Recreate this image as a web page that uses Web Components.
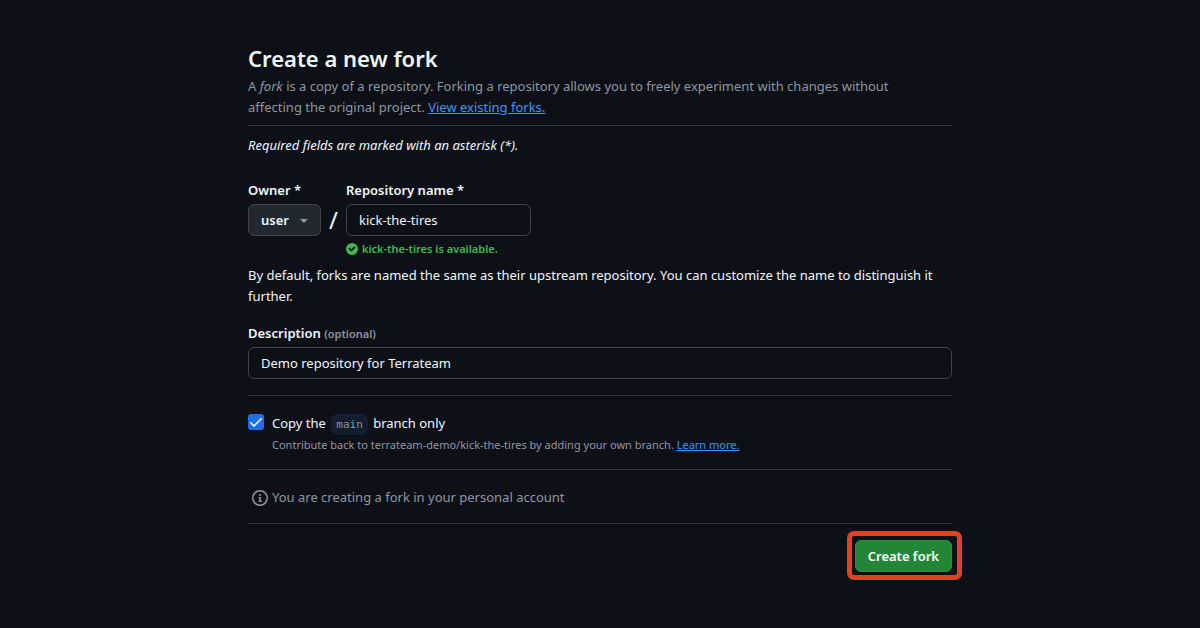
<!DOCTYPE html>
<html lang="en">
<head>
<meta charset="utf-8">
<meta name="viewport" content="width=device-width, initial-scale=1">
<title>Create a new fork</title>
<style>
  :root {
    --bg: #0d1117;
    --text: #f0f6fc;
    --muted: #8d96a0;
    --border: #30363d;
    --control-border: #3d444d;
    --link: #4493f8;
    --success: #3fb950;
  }
  body {
    margin: 0;
    background: var(--bg);
    color: var(--text);
    font: 13px/21px "Noto Sans", "Open Sans", sans-serif;
  }
</style>
</head>
<body>
<fork-page>
  <page-header slot="header" heading="Create a new fork">
    <p>A <em>fork</em> is a copy of a repository. Forking a repository allows you to freely experiment with changes without affecting the original project. <text-link href="#forks">View existing forks.</text-link></p>
  </page-header>
  <fork-form></fork-form>
</fork-page>

<script>
class TextLink extends HTMLElement {
  constructor() {
    super();
    this.attachShadow({ mode: "open" });
    this.shadowRoot.innerHTML = `
      <style>
        :host { display: inline; }
        a {
          color: var(--link);
          text-decoration: underline;
        }
      </style>
      <a href="${this.getAttribute("href") || "#"}"><slot></slot></a>
    `;
  }
}

class PageHeader extends HTMLElement {
  constructor() {
    super();
    this.attachShadow({ mode: "open" });
    this.shadowRoot.innerHTML = `
      <style>
        :host {
          display: block;
          padding-bottom: 7px;
          border-bottom: 1px solid var(--border);
        }
        h1 {
          margin: 0;
          font-size: 22px;
          line-height: 36px;
          font-weight: 600;
        }
        ::slotted(p) {
          max-width: 670px;
          margin: 0;
          color: var(--muted);
        }
      </style>
      <h1>${this.getAttribute("heading")}</h1>
      <slot></slot>
    `;
  }
}

class OwnerSelect extends HTMLElement {
  constructor() {
    super();
    this.attachShadow({ mode: "open" });
    this.shadowRoot.innerHTML = `
      <style>
        :host { display: block; }
        label {
          display: block;
          margin-bottom: 3px;
          font-weight: 600;
        }
        .control {
          display: grid;
          align-items: center;
        }
        select, svg { grid-area: 1 / 1; }
        select {
          appearance: none;
          box-sizing: border-box;
          height: 32px;
          padding: 0 31px 0 12px;
          border: 1px solid var(--control-border);
          border-radius: 6px;
          background: #212830;
          color: var(--text);
          font: inherit;
          font-weight: 600;
        }
        svg {
          justify-self: end;
          margin-right: 9px;
          fill: #9198a1;
          pointer-events: none;
        }
      </style>
      <label for="owner">Owner *</label>
      <div class="control">
        <select id="owner"><option>user</option></select>
        <svg width="16" height="16" viewBox="0 0 16 16" aria-hidden="true">
          <path d="m4.427 7.427 3.396 3.396a.25.25 0 0 0 .354 0l3.396-3.396A.25.25 0 0 0 11.396 7H4.604a.25.25 0 0 0-.177.427Z"/>
        </svg>
      </div>
    `;
  }
}

class TextField extends HTMLElement {
  constructor() {
    super();
    this.attachShadow({ mode: "open" });
    this.shadowRoot.innerHTML = `
      <style>
        :host { display: block; }
        label {
          display: block;
          margin-bottom: 3px;
          font-weight: 600;
        }
        ::slotted(small) {
          color: var(--muted);
          font-size: 11px;
          font-weight: 600;
        }
        input {
          display: block;
          box-sizing: border-box;
          width: 100%;
          height: 32px;
          padding: 0 12px;
          border: 1px solid var(--control-border);
          border-radius: 6px;
          background: var(--bg);
          color: var(--text);
          font: inherit;
        }
      </style>
      <label for="field">${this.getAttribute("label")} <slot></slot></label>
      <input id="field" type="text" value="${this.getAttribute("value")}">
      <slot name="message"></slot>
    `;
  }
}

class SuccessMessage extends HTMLElement {
  constructor() {
    super();
    this.attachShadow({ mode: "open" });
    this.shadowRoot.innerHTML = `
      <style>
        :host {
          display: flex;
          align-items: center;
          gap: 4px;
          margin-top: 4px;
          color: var(--success);
          font-size: 11px;
          line-height: 17px;
          font-weight: 600;
        }
        svg { fill: currentColor; }
      </style>
      <svg width="12" height="12" viewBox="0 0 12 12" aria-hidden="true">
        <path d="M6 0a6 6 0 1 1 0 12A6 6 0 0 1 6 0Zm-.705 8.737L9.63 4.403 8.392 3.166 5.295 6.263l-1.7-1.702L2.356 5.8l2.938 2.938Z"/>
      </svg>
      <span><slot></slot></span>
    `;
  }
}

class BranchOption extends HTMLElement {
  constructor() {
    super();
    this.attachShadow({ mode: "open" });
    this.shadowRoot.innerHTML = `
      <style>
        :host {
          display: grid;
          grid-template-columns: 16px 1fr;
          column-gap: 8px;
          padding: 17px 0 15px;
          border-top: 1px solid var(--border);
          border-bottom: 1px solid var(--border);
        }
        input {
          appearance: none;
          width: 16px;
          height: 16px;
          margin: 1px 0 0;
          border: 1px solid var(--control-border);
          border-radius: 3px;
        }
        input:checked {
          border: 0;
          background: #1f6feb url("data:image/svg+xml,%3Csvg xmlns='http://www.w3.org/2000/svg' viewBox='0 0 12 9'%3E%3Cpath fill='white' fill-rule='evenodd' d='M11.78.22a.75.75 0 0 1 0 1.061L4.52 8.541a.75.75 0 0 1-1.062 0L.202 5.285a.75.75 0 0 1 1.061-1.061l2.725 2.723L10.718.22a.75.75 0 0 1 1.062 0Z'/%3E%3C/svg%3E") center / 12px 9px no-repeat;
        }
        ::slotted(p) {
          grid-column: 2;
          margin: 2px 0 0;
          color: var(--muted);
          font-size: 11px;
          line-height: 18px;
        }
      </style>
      <input id="branch" type="checkbox" checked>
      <label for="branch"><slot name="label"></slot></label>
      <slot></slot>
    `;
  }
}

class BranchName extends HTMLElement {
  constructor() {
    super();
    this.attachShadow({ mode: "open" });
    this.shadowRoot.innerHTML = `
      <style>
        :host { display: inline; }
        code {
          margin: 0 2px;
          padding: 4px 5px;
          border-radius: 6px;
          background: #121d2f;
          color: var(--muted);
          font: 11px "DejaVu Sans Mono", monospace;
        }
      </style>
      <code><slot></slot></code>
    `;
  }
}

class InfoNote extends HTMLElement {
  constructor() {
    super();
    this.attachShadow({ mode: "open" });
    this.shadowRoot.innerHTML = `
      <style>
        :host {
          display: flex;
          align-items: center;
          gap: 4px;
          padding: 17px 4px 15px;
          border-bottom: 1px solid var(--border);
          color: var(--muted);
        }
        svg { fill: currentColor; }
      </style>
      <svg width="16" height="16" viewBox="0 0 16 16" aria-hidden="true">
        <path d="M0 8a8 8 0 1 1 16 0A8 8 0 0 1 0 8Zm8-6.5a6.5 6.5 0 1 0 0 13 6.5 6.5 0 0 0 0-13ZM6.5 7.75A.75.75 0 0 1 7.25 7h1a.75.75 0 0 1 .75.75v2.75h.25a.75.75 0 0 1 0 1.5h-2a.75.75 0 0 1 0-1.5h.25v-2h-.25a.75.75 0 0 1-.75-.75ZM8 6a1 1 0 1 1 0-2 1 1 0 0 1 0 2Z"/>
      </svg>
      <span><slot></slot></span>
    `;
  }
}

class PrimaryButton extends HTMLElement {
  constructor() {
    super();
    this.attachShadow({ mode: "open" });
    this.shadowRoot.innerHTML = `
      <style>
        :host {
          display: block;
          position: relative;
        }
        /* highlight ring round the button */
        :host::after {
          content: "";
          position: absolute;
          inset: -9px -10px -8px -8px;
          border: 5px solid #e2431e;
          border-radius: 7px;
          pointer-events: none;
        }
        button {
          display: block;
          height: 32px;
          padding: 0 12px;
          border: 1px solid #2f8f40;
          border-radius: 6px;
          background: #238636;
          color: #fff;
          font: inherit;
          font-weight: 600;
        }
      </style>
      <button type="button"><slot></slot></button>
    `;
  }
}

class ForkForm extends HTMLElement {
  constructor() {
    super();
    this.attachShadow({ mode: "open" });
    this.shadowRoot.innerHTML = `
      <style>
        :host { display: block; }
        .required {
          margin: 9px 0 24px;
          font-style: italic;
        }
        .names {
          display: flex;
          align-items: flex-start;
          gap: 8px;
        }
        .names text-field { flex: 0 1 185px; }
        .slash {
          padding-top: 24px;
          font-size: 24px;
          line-height: 32px;
        }
        .hint { margin: 8px 0 16px; }
        branch-option { margin-top: 16px; }
        .actions {
          display: flex;
          justify-content: flex-end;
          margin-top: 16px;
        }
      </style>
      <p class="required">Required fields are marked with an asterisk (*).</p>
      <div class="names">
        <owner-select></owner-select>
        <span class="slash">/</span>
        <text-field label="Repository name *" value="kick-the-tires">
          <success-message slot="message">kick-the-tires is available.</success-message>
        </text-field>
      </div>
      <p class="hint">By default, forks are named the same as their upstream repository. You can customize the name to distinguish it further.</p>
      <text-field label="Description" value="Demo repository for Terrateam"><small>(optional)</small></text-field>
      <branch-option>
        <span slot="label">Copy the <branch-name>main</branch-name> branch only</span>
        <p>Contribute back to terrateam-demo/kick-the-tires by adding your own branch. <text-link href="#learn">Learn more.</text-link></p>
      </branch-option>
      <info-note>You are creating a fork in your personal account</info-note>
      <div class="actions"><primary-button>Create fork</primary-button></div>
    `;
  }
}

class ForkPage extends HTMLElement {
  constructor() {
    super();
    this.attachShadow({ mode: "open" });
    this.shadowRoot.innerHTML = `
      <style>
        :host {
          display: block;
          box-sizing: border-box;
          max-width: 752px;
          margin: 0 auto;
          padding: 40px 24px;
        }
      </style>
      <slot name="header"></slot>
      <main><slot></slot></main>
    `;
  }
}

customElements.define("text-link", TextLink);
customElements.define("page-header", PageHeader);
customElements.define("owner-select", OwnerSelect);
customElements.define("text-field", TextField);
customElements.define("success-message", SuccessMessage);
customElements.define("branch-option", BranchOption);
customElements.define("branch-name", BranchName);
customElements.define("info-note", InfoNote);
customElements.define("primary-button", PrimaryButton);
customElements.define("fork-form", ForkForm);
customElements.define("fork-page", ForkPage);
</script>
</body>
</html>
